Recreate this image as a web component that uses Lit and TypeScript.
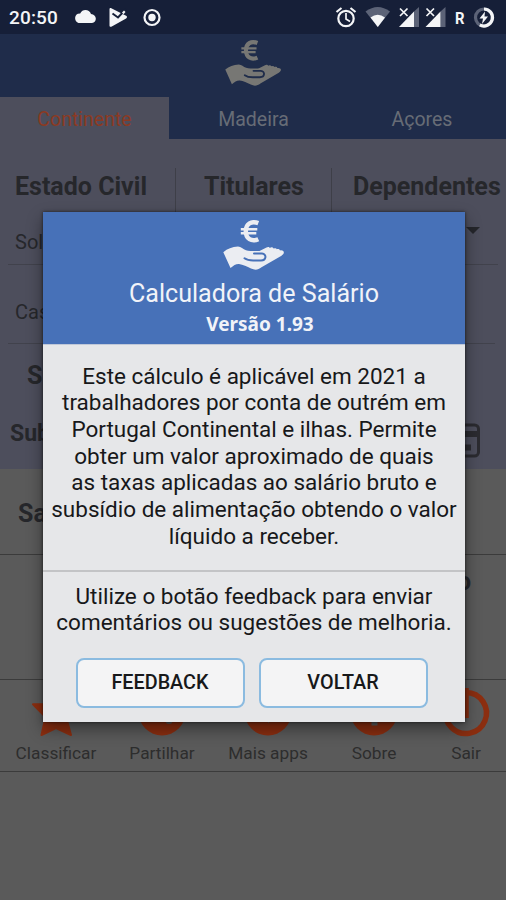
import { LitElement, html, css, svg } from "lit";
import { customElement, property } from "lit/decorators.js";

@customElement("hand-logo")
class HandLogo extends LitElement {
  static styles = css`
    :host { display: block; }
    svg { display: block; width: 100%; height: 100%; }
    .hand { fill: currentColor; }
    .euro, .bar { fill: none; stroke: currentColor; }
    .euro { stroke-width: 4.500; }
    .bar { stroke-width: 2.500; }
    .palm { fill: none; stroke: var(--back); stroke-width: 2; stroke-linecap: round; }
  `;
  render() {
    return html`<svg viewBox="0 0 62 50">
      <path class="euro" d="M35.300 3.200C28.500 .6 22.800 3.600 22.800 11.200s5.700 10.900 12.500 8" />
      <path class="bar" d="M17.800 9.200h16.500M17.800 13.200h15.500" />
      <path class="hand" d="M.3 32.200C4.500 28.500 9 27 15 26.500c3 0 5 2.500 8 3.800 3 1 8 .7 13 .8 4 0 6 1.500 6.200 3.400l7.600-5.500c1.500-1 3.500-.8 4 .3 1.500-.6 3 .1 3.200 1.200 2-.6 4.500.6 3.700 2.700-.4 1-1.300 1.700-2.200 2.500L38.500 47.300c-3.500 2.700-6.500 3-10.500 1.200-4-1.800-8-4-12-4.500-3-.2-5.500 1.500-8.500 4Z" />
      <path class="hand" d="M36 31.200l7.500-3.700c1.200-1 3-.7 3.400.5 1-1 3-.8 3.600.5l2 1-10 8Z" />
      <path class="palm" d="M21.500 38.300c3 2.200 6 2.300 9.500 2.200h7c5.500 0 6-6.500 1-7h-8" />
    </svg>`;
  }
}

@customElement("status-bar")
class StatusBar extends LitElement {
  static styles = css`
    :host { display: flex; height: 34px; background: #161f38; color: #f4f5f7; font: 500 19px/36px Roboto, sans-serif; }
    .time { width: 73px; padding-left: 9px; box-sizing: border-box; letter-spacing: .15px; }
    svg { display: block; width: 433px; height: 34px; }
    .r { font: 700 16px Roboto, sans-serif; fill: #f4f5f7; }
    .w { fill: #f4f5f7; }
    .dim { fill: #5c6377; }
    .line { fill: none; stroke: #f4f5f7; stroke-width: 2.200; }
    .thick { stroke-width: 3.200; }
    .thin { stroke-width: 1.700; }
    .dimline { fill: none; stroke: #5c6377; stroke-width: 3.200; }
    .cut { fill: none; stroke: #161f38; stroke-width: 2; }
  `;
  signal() {
    return svg`<path class="dim" d="M15 11.500 20 7v20h-5Z"/><path class="w" d="M0 27 15 11.500V27Z"/><path class="line thin" d="M1 8.500l7.500 7.500M8.500 8.500 1 16"/>`;
  }
  render() {
    return html`<span class="time">20:50</span>
      <svg viewBox="73 0 433 34">
        <path class="w" d="M78.500 23a5 5 0 0 1-.6-9.200l2.300-.4c2.200-5 9.300-4.300 10.800.6 3 .4 4.500 2.300 4.800 4.300.2 2.700-1.300 4.500-3.800 4.700Z"/>
        <path class="w" d="M109.500 9c0-1 1-1.200 1.800-.7l14.800 7.500c1.200.7 1.200 2 0 2.700l-14.300 8c-1.500.8-2.300.2-2.300-1Z"/>
        <path class="cut" d="M112.500 13.500l5.500 4 8-8.500"/><path class="w" d="M122 12.500l2-2 1.500 1.500-2 2.300Z"/>
        <circle class="line" cx="152" cy="17.500" r="7.500"/><circle class="w" cx="152" cy="17.500" r="3.700"/>
        <circle class="line" cx="346" cy="18.500" r="7.700"/><path class="line thin" d="M346 13v6l4 2.500"/><path class="line" d="M336.500 12l5-4M355.500 12l-5-4"/>
        <path class="dim" d="M365.500 11.500q12.300-9 24.500 0L377.800 27Z"/><path class="w" d="M370.500 17.500q7.200-5.500 14.500 0L377.800 27Z"/>
        <g transform="translate(399)">${this.signal()}</g>
        <g transform="translate(425.500)">${this.signal()}</g>
        <text class="r" x="455" y="24" textLength="9.500" lengthAdjust="spacingAndGlyphs">R</text>
        <circle class="dimline" cx="484" cy="17.500" r="8.500"/><path class="line thick" d="M484 9a8.500 8.500 0 1 1-4.200 15.900"/>
        <path class="w" d="M485 11.500 479.500 18.500h3.500l-1 5.500 6-7.500h-3.500Z"/>
      </svg>`;
  }
}

@customElement("about-dialog")
class AboutDialog extends LitElement {
  static styles = css`
    :host { display: flex; flex-direction: column; box-sizing: border-box; width: 422px; height: 510px; background: #e6e7e9; color: #17181a; box-shadow: 0 7px 15px rgba(0,0,0,.42), 0 0 3px rgba(0,0,0,.6); font: 22.500px/26.700px Roboto, sans-serif; }
    .head { height: 133px; box-sizing: border-box; padding-top: 8px; background: #4771b8; color: #f1f3f8; text-align: center; border-bottom: 1px solid #c0c8d8; --back: #4771b8; }
    hand-logo { width: 62px; height: 50px; margin: 0 auto; color: #ebedf2; }
    .title { font-size: 25.100px; line-height: 32px; margin-top: 8px; }
    .version { font: 700 19px/28px "Noto Sans", sans-serif; padding-left: 12px; }
    .about { height: 227px; box-sizing: border-box; padding-top: 17.500px; border-bottom: 2px solid #c3c4c6; }
    .line { display: block; text-align: center; white-space: nowrap; }
    .hint { padding-top: 10.500px; }
    .buttons { display: flex; gap: 14px; padding: 22px 0 0 32.500px; }
    button { width: 169px; height: 50px; padding: 0; border: 2px solid #8bbbe0; border-radius: 8px; background: #f4f4f5; color: #17181a; font: 500 19.800px/46px Roboto, sans-serif; }
  `;
  render() {
    const about = ["Este cálculo é aplicável em 2021 a", "trabalhadores por conta de outrém em", "Portugal Continental e ilhas. Permite", "obter um valor aproximado de quais", "as taxas aplicadas ao salário bruto e", "subsídio de alimentação obtendo o valor", "líquido a receber."];
    const hint = ["Utilize o botão feedback para enviar", "comentários ou sugestões de melhoria."];
    return html`
      <div class="head"><hand-logo></hand-logo><div class="title">Calculadora de Salário</div><div class="version">Versão 1.93</div></div>
      <div class="about">${about.map((t) => html`<span class="line">${t}</span>`)}</div>
      <div class="hint">${hint.map((t) => html`<span class="line">${t}</span>`)}</div>
      <div class="buttons"><button>FEEDBACK</button><button>VOLTAR</button></div>`;
  }
}

@customElement("nav-item")
class NavItem extends LitElement {
  @property() kind = "";
  @property() label = "";
  static styles = css`
    :host { display: flex; flex-direction: column; align-items: center; padding-top: 10px; color: #2d2d2d; font: 17.300px/24px Roboto, sans-serif; white-space: nowrap; }
    svg { display: block; width: 50px; height: 50px; overflow: visible; }
    .label { margin-top: 1px; }
    .fill { fill: #8b2e10; }
    .star { stroke: #8b2e10; stroke-width: 2; stroke-linejoin: round; }
    .ring { fill: none; stroke: #8b2e10; stroke-width: 5.500; }
    .mark { fill: #5a5a5a; }
  `;
  icon() {
    if (this.kind === "star") return svg`<path class="fill star" d="M25 0l6 14 17 .3-13 12.700 5 18L25 38 10.500 45l4-18L2 14.300 19 14Z"/>`;
    if (this.kind === "power") return svg`<path class="ring" d="M25 2.500a20.500 20.500 0 1 1-8 1.600"/><path class="ring" d="M25-2v30"/>`;
    const mark = this.kind === "share" ? svg`<circle class="mark" cx="32" cy="30.500" r="3.500"/>` : this.kind === "more" ? svg`<path class="mark" d="M23 26h5l-2.500 7.500Z"/>` : svg`<path class="mark" d="M22.500 21h6v14.500h-6Z"/>`;
    return svg`<circle class="fill" cx="25" cy="22" r="23.500"/>${mark}`;
  }
  render() {
    return html`<svg viewBox="0 0 50 50">${this.icon()}</svg><span class="label">${this.label}</span>`;
  }
}

@customElement("app-root")
class AppRoot extends LitElement {
  static styles = css`
    :host { display: block; position: relative; width: 506px; height: 900px; overflow: hidden; background: #5a5a5a; color: #26272b; font-family: Roboto, sans-serif; }
    .top { height: 105px; box-sizing: border-box; padding-top: 6px; background: #1f2c4a; --back: #1f2c4a; }
    .top hand-logo { width: 57px; height: 46px; margin: 0 auto; color: #777774; }
    .tabs { display: grid; grid-template-columns: 169px 168px 169px; margin-top: 11px; height: 42px; text-align: center; font-size: 19.500px; line-height: 45px; color: #676c76; }
    .tab { padding-left: 1px; }
    .tab.on { background: #4d4e5c; color: #8b3a23; padding: 0; }
    .form { height: 330px; background: #4d4e5c; }
    .heads { display: flex; padding-top: 29px; height: 45px; font-weight: 700; font-size: 25px; line-height: 37px; white-space: nowrap; }
    .heads div { box-sizing: border-box; height: 45px; border-right: 1px solid #3e3f48; }
    .h1 { width: 176px; padding-left: 15px; }
    .h2 { width: 156px; padding-left: 28px; }
    .heads .h3 { width: 174px; padding-left: 21px; border: 0; }
    .row { display: flex; justify-content: space-between; box-sizing: border-box; font-size: 20px; }
    .civil { height: 52px; margin: 0 8px; padding: 5px 0 0 7px; line-height: 48px; border-bottom: 1px solid #41424c; }
    .arrow { width: 0; height: 0; margin: 9px 18px 0 0; border: 7px solid transparent; border-top-color: #25262b; border-bottom: 0; }
    .married { height: 79px; margin: 0 11px 0 8px; padding: 24px 0 0 7px; line-height: 46px; border-bottom: 1px solid #41424c; }
    .strong { font-weight: 700; font-size: 25px; line-height: 40px; }
    .salary { height: 48px; padding: 12px 0 0 27px; }
    .row.meal { padding: 10px 26px 0 10px; font-size: 23px; }
    .card { width: 44px; height: 36px; margin-top: 9px; margin-bottom: -5px; }
    .meal span { margin-top: 0; }
    .card rect, .card path { fill: none; stroke: #2b2b30; stroke-width: 3; }
    .card .band { stroke-width: 6; }
    .net { height: 86px; box-sizing: border-box; padding: 25px 0 0 18px; border-bottom: 1px solid #3b3b3b; }
    .total { height: 125px; box-sizing: border-box; padding: 7px 35px 0 0; text-align: right; border-bottom: 1px solid #3b3b3b; }
    .nav { display: grid; grid-template-columns: 112px 100px 112px 100px 84px; height: 91px; border-bottom: 1px solid #3b3b3b; }
    about-dialog { position: absolute; left: 43px; top: 212px; }
  `;
  render() {
    return html`
      <status-bar></status-bar>
      <header class="top"><hand-logo></hand-logo>
        <div class="tabs"><span class="tab on">Continente</span><span class="tab">Madeira</span><span class="tab">Açores</span></div>
      </header>
      <section class="form">
        <div class="heads"><div class="h1">Estado Civil</div><div class="h2">Titulares</div><div class="h3">Dependentes</div></div>
        <div class="row civil"><span>Sol</span><i class="arrow"></i></div>
        <div class="row married">Cas</div>
        <div class="strong salary">S</div>
        <div class="row strong meal"><span>Sub</span><svg class="card" viewBox="0 0 44 36"><rect x="1.500" y="2" width="41" height="31" rx="4"/><path class="band" d="M2 11h40M22 24.500h13"/></svg></div>
      </section>
      <div class="strong net">Sa</div>
      <div class="strong total">o</div>
      <nav class="nav">
        <nav-item kind="star" label="Classificar"></nav-item>
        <nav-item kind="share" label="Partilhar"></nav-item>
        <nav-item kind="more" label="Mais apps"></nav-item>
        <nav-item kind="about" label="Sobre"></nav-item>
        <nav-item kind="power" label="Sair"></nav-item>
      </nav>
      <about-dialog></about-dialog>`;
  }
}
